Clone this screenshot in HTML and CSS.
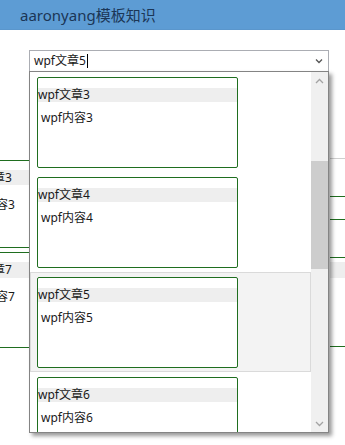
FILE: index.html
```html
<!DOCTYPE html>
<html lang="zh">
<head>
	<meta charset="UTF-8">
	<title>aaronyang模板知识</title>
	<link rel="stylesheet" href="styles.css">
</head>
<body>
	<!-- 窗口标题栏 -->
	<div class="titleBar">aaronyang模板知识</div>

	<!-- 可编辑的下拉框 -->
	<div class="combo">
		<span class="comboText">wpf文章5</span><span class="caret"></span>
		<svg class="comboArrow" width="8" height="6" viewBox="0 0 8 6"><polyline points="1,1.5 4,4.5 7,1.5" fill="none" stroke="#555" stroke-width="1.3"/></svg>
	</div>

	<!-- 下拉框后面的卡片列表 -->
	<div class="board">
		<div class="colLeft">
			<div class="bgCard bgCard1">
				<div class="bgTitle">wpf文章3</div>
				<div class="bgBody">wpf内容3</div>
			</div>
			<div class="bgCard bgCard2">
				<div class="bgTitle bgTitle2">wpf文章7</div>
				<div class="bgBody bgBody2">wpf内容7</div>
			</div>
		</div>
		<div class="colRight">
			<div class="rLine r1"></div>
			<div class="rLine r2"></div>
			<div class="rLine r3"></div>
			<div class="rBar"></div>
			<div class="rLine r5"></div>
		</div>
	</div>

	<!-- 弹出的下拉列表 -->
	<div class="popup">
		<div class="list">
			<div class="row">
				<div class="card"><div class="cardTitle">wpf文章3</div><div class="cardBody">wpf内容3</div></div>
			</div>
			<div class="row">
				<div class="card"><div class="cardTitle">wpf文章4</div><div class="cardBody">wpf内容4</div></div>
			</div>
			<div class="row rowSelected">
				<div class="card"><div class="cardTitle">wpf文章5</div><div class="cardBody">wpf内容5</div></div>
			</div>
			<div class="row">
				<div class="card"><div class="cardTitle">wpf文章6</div><div class="cardBody">wpf内容6</div></div>
			</div>
		</div>
		<div class="scroll">
			<div class="scrollBtn">
				<svg width="9" height="6" viewBox="0 0 9 6"><polyline points="1,5 4.5,1.5 8,5" fill="none" stroke="#a3a3a3" stroke-width="1.3"/></svg>
			</div>
			<div class="track"><div class="thumb"></div></div>
			<div class="scrollBtn">
				<svg width="9" height="6" viewBox="0 0 9 6"><polyline points="1,1 4.5,4.5 8,1" fill="none" stroke="#a3a3a3" stroke-width="1.3"/></svg>
			</div>
		</div>
	</div>
</body>
</html>
```

FILE: styles.css
```css
html, body { margin: 0; padding: 0; }
body { width: 345px; height: 445px; overflow: hidden; background: #fff; position: relative;
	font-family: "Noto Sans", "Noto Sans CJK SC", sans-serif; font-size: 12px; color: #1a1a1a; }

.titleBar { height: 30px; line-height: 30px; padding-left: 20px; background: #5d9cd4; color: #1b3656; font-size: 15px; box-sizing: border-box; border-bottom: 1px solid #5a96cc; }

.combo { margin: 20px 0 0 29px; width: 300px; height: 22px; box-sizing: border-box; border: 1px solid #abadb3; background: #fff;
	display: flex; align-items: center; padding-left: 4px; }
.comboText { line-height: 16px; }
.caret { display: inline-block; width: 1px; height: 14px; background: #000; margin-left: 1px; }
.comboArrow { margin-left: auto; margin-right: 5px; }

.board { margin-top: 86px; display: flex; justify-content: space-between; }
.colLeft { margin-left: -42px; width: 100px; padding-top: 2px; }
.bgCard { border: 1px solid #1f6e1f; box-sizing: border-box; }
.bgCard1 { height: 88px; margin-bottom: 4px; }
.bgCard2 { height: 96px; }
.bgTitle { margin-top: 9px; height: 15px; line-height: 15px; background: #eeeeee; padding-left: 1px; }
.bgTitle2 { height: 16px; line-height: 16px; }
.bgBody { margin-top: 12px; line-height: 16px; padding-left: 4px; }
.bgBody2 { margin-top: 11px; }

.colRight { width: 15px; border-top: 1px solid #cfcfcf; }
.rLine { border-bottom: 1px solid #1f6e1f; }
.r1 { height: 37px; }
.r2 { height: 22px; }
.r3 { height: 37px; }
.rBar { margin-top: 4px; height: 16px; background: #eeeeee; }
.r5 { height: 68px; }

.popup { position: absolute; left: 29px; top: 71px; width: 300px; height: 362px; box-sizing: border-box;
	border: 1px solid #848484; background: #fff; display: flex; overflow: hidden;
	box-shadow: 3px 3px 4px rgba(0, 0, 0, 0.4); }
.list { flex: 1; overflow: hidden; }
.row { height: 100px; box-sizing: border-box; border: 1px solid transparent; padding: 4px 0 0 6px; }
.rowSelected { background: #f3f3f3; border-color: #dadada; }
.card { width: 201px; height: 91px; box-sizing: border-box; border: 1px solid #1f6e1f; border-radius: 2px; background: #fff; }
.cardTitle { margin-top: 10px; height: 14px; line-height: 14px; background: #eeeeee; }
.cardBody { margin-top: 8px; line-height: 16px; padding-left: 3px; }

.scroll { width: 17px; background: #f0f0f0; display: flex; flex-direction: column; }
.scrollBtn { height: 17px; display: flex; align-items: center; justify-content: center; }
.track { flex: 1; }
.thumb { margin: 72px 0 0 0; height: 108px; background: #cdcdcd; }
```
